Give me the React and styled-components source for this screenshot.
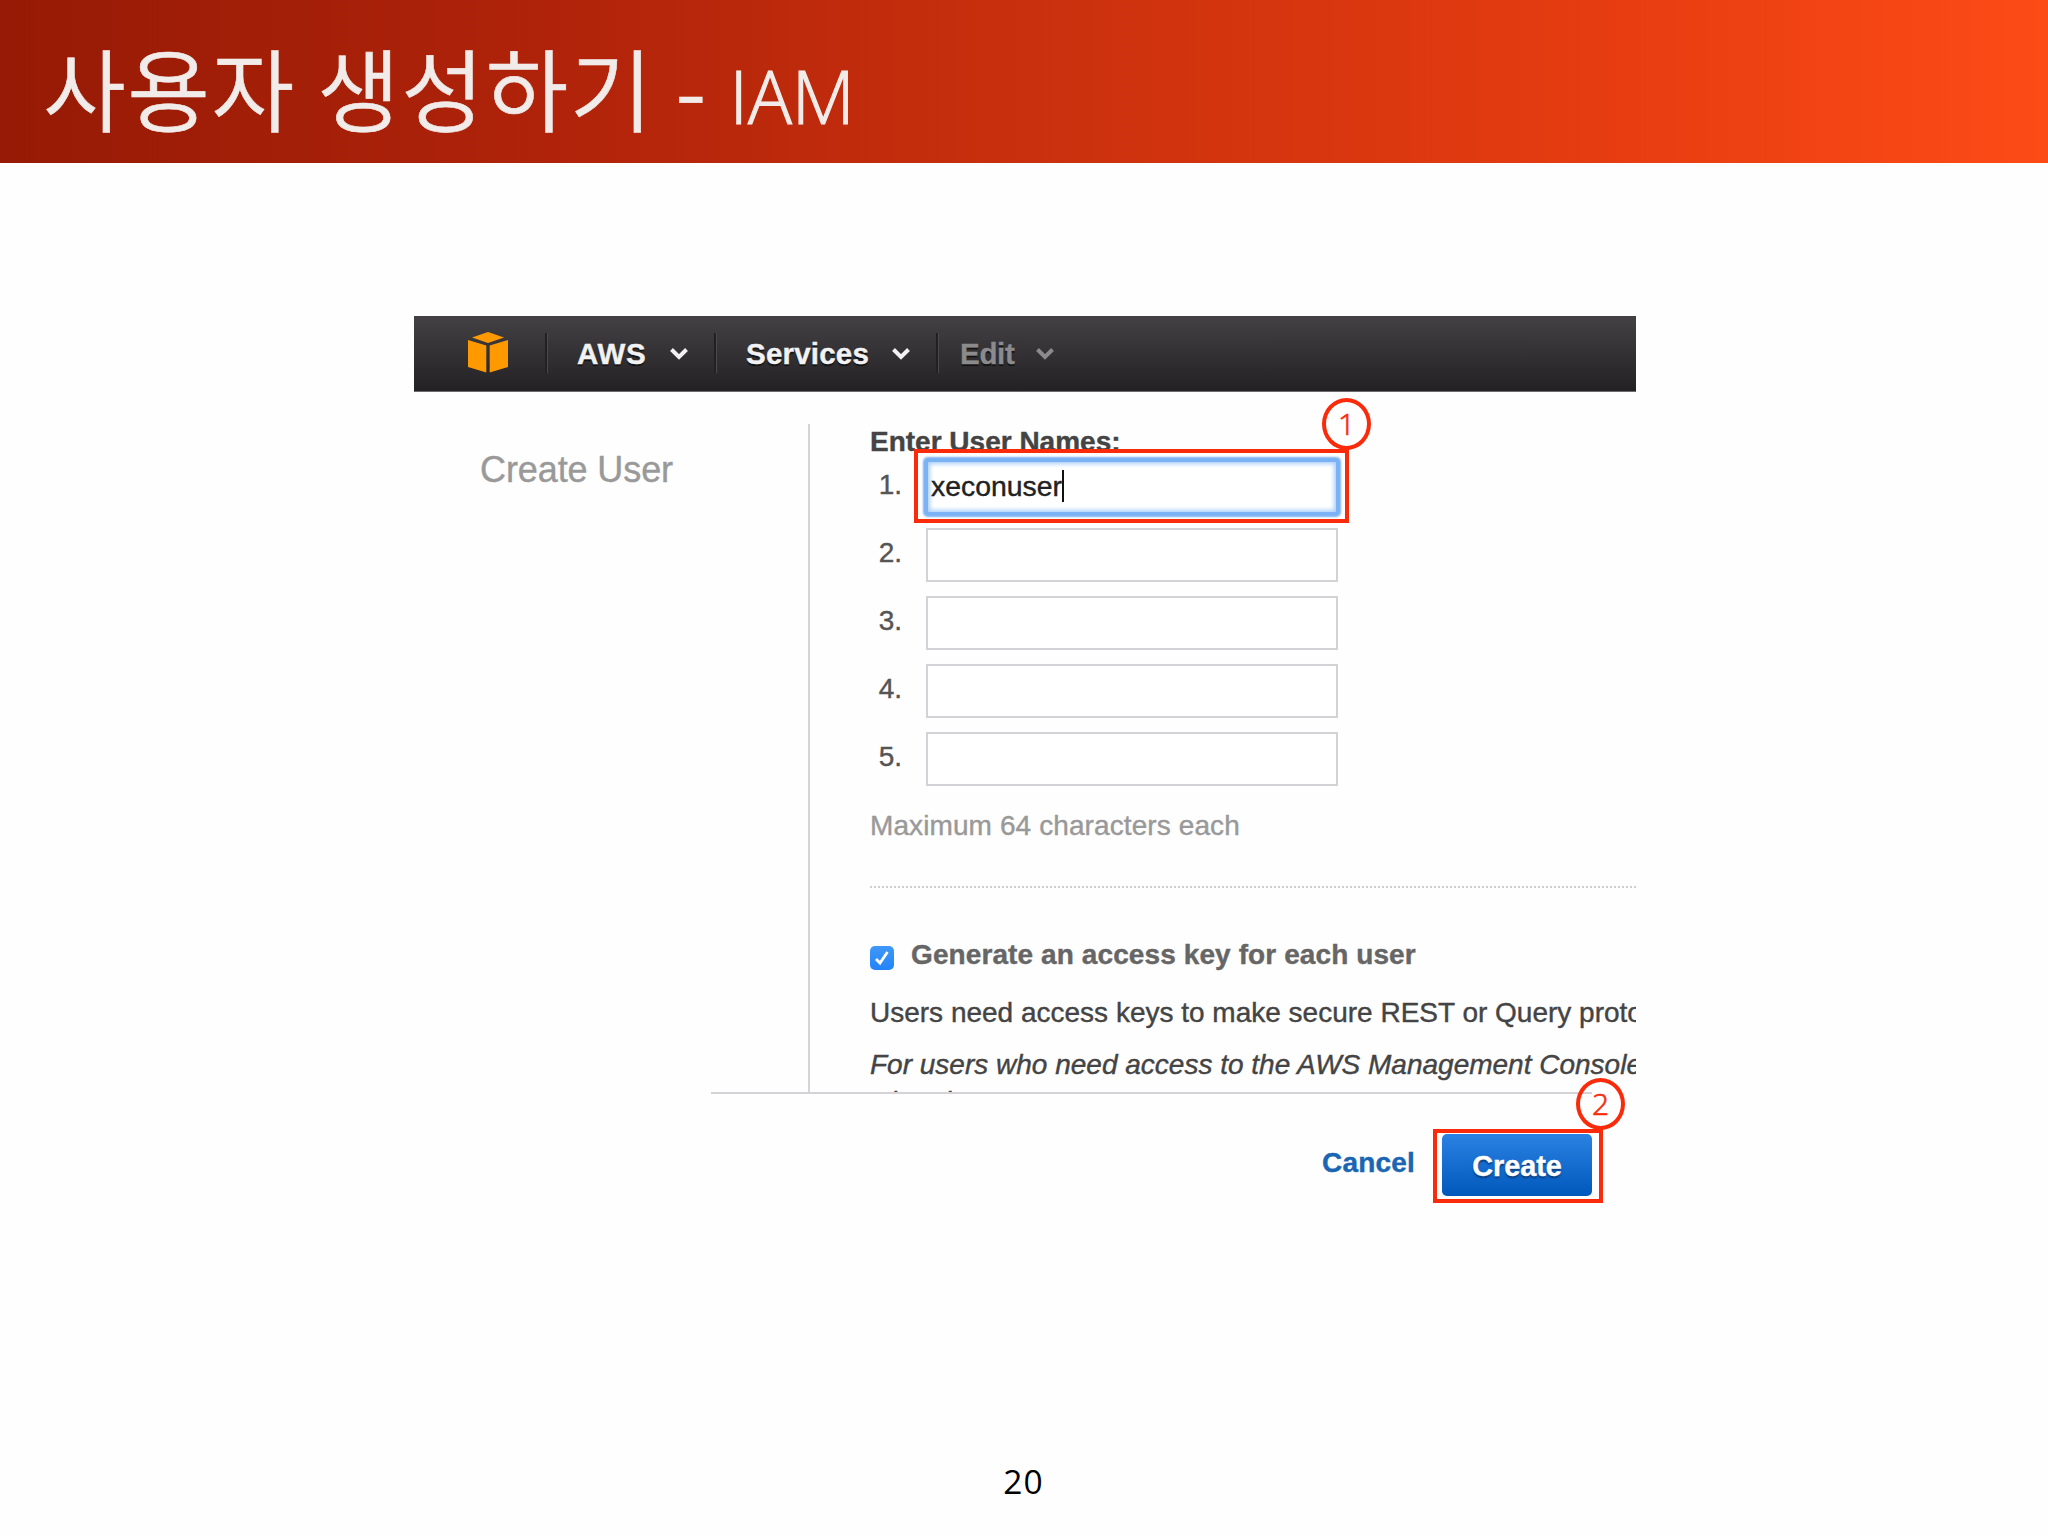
import React from 'react';
import styled, { createGlobalStyle } from 'styled-components';

const GlobalStyle = createGlobalStyle`
    * {
      box-sizing: border-box;
    }

    body {
      margin: 0;
      background: #fefefe;
    }
`;

const Slide = styled.div`
    display: flex;
    flex-direction: column;
    width: 2048px;
    height: 1536px;
    overflow: hidden;
    background: #fefefe;
    font-family: "Liberation Sans", Arial, sans-serif;
    font-size: 28px;
    line-height: 34px;
`;

const SlideHeader = styled.header`
    display: flex;
    align-items: flex-start;
    height: 163px;
    padding: 21px 0 0 43px;
    background: linear-gradient(90deg, #961a05 0%, #b0230a 27%, #c9300d 50%, #e63c11 78%, #fd4b16 100%);
    color: #f1ece9;
    white-space: pre;
    -webkit-text-stroke: 0.6px;
`;

const SlideTitle = styled.h1`
    margin: 0;
    font-family: "Noto Sans CJK KR DemiLight", "Noto Sans CJK KR", sans-serif;
    font-size: 90px;
    line-height: 130px;
    font-weight: 350;
    letter-spacing: 1.4px;
    word-spacing: 0;
`;

const SlideTopic = styled.span`
    margin: 18px 0 0 22px;
    font-family: "Open Sans", "Noto Sans", sans-serif;
    font-size: 73px;
    line-height: 114px;
    font-weight: 350;
    -webkit-text-stroke: 1.2px;
`;

const Console = styled.main`
    width: 1222px;
    height: 894px;
    margin: 153px 0 0 414px;
    -webkit-text-stroke: 0.4px;
`;

const NavBar = styled.nav`
    display: flex;
    align-items: center;
    height: 76px;
    background: linear-gradient(#434144, #232123);
    border-bottom: 1px solid #6d6b6d;
`;

const NavLogo = styled.div`
    display: flex;
    width: 131px;
    padding: 0 0 3px 53px;
`;

const NavItem = styled.div`
    display: flex;
    align-items: center;
    justify-content: space-between;
    width: ${props => props.width}px;
    height: 40px;
    margin-bottom: 2px;
    padding: 2px 26px 0 ${props => props.indent}px;
    border-left: 2px solid #222022;
    box-shadow: inset 1px 0 0 #4b494c;
    color: ${props => props.muted ? "#8b8a8c" : "#f2f2f2"};
    font-size: 29.5px;
    font-weight: bold;
    letter-spacing: ${props => props.spacing || 0}px;
    text-shadow: 0 2px 1px #111;
`;

const ConsoleBody = styled.section`
    display: flex;
    height: 700px;
    overflow: hidden;
`;

const Sidebar = styled.aside`
    flex: none;
    width: 396px;
    margin-top: 32px;
    padding: 24px 0 0 66px;
    border-right: 2px solid #d6d3d8;
`;

const SidebarTitle = styled.h2`
    margin: 0;
    color: #999;
    font-size: 36px;
    line-height: 44px;
    font-weight: normal;
    letter-spacing: -0.1px;
`;

const Form = styled.div`
    flex: none;
    width: 826px;
    padding: 33px 0 0 60px;
    color: #444;
`;

const FormHeading = styled.h3`
    margin: 0 0 1px;
    font-size: 28px;
    font-weight: bold;
`;

const UserList = styled.div`
    display: grid;
    gap: 14px;
`;

const UserRow = styled.div`
    display: grid;
    grid-template-columns: 32px 412px;
    column-gap: 24px;
    height: 54px;
`;

const UserNumber = styled.span`
    padding-bottom: 5px;
    line-height: 49px;
    text-align: right;
    color: #555;
`;

const UserField = styled.div`
    position: relative;
    display: flex;
    align-items: center;
    height: 54px;
    padding: 0 0 2px 3px;
    border: 2px solid ${props => props.focused ? "#7ab2f5" : "#d4d2d6"};
    border-radius: ${props => props.focused ? "2px" : "0"};
    background: #fff;
    box-shadow: ${props => props.focused ? "0 0 2px 3px #7ab2f5, inset 0 0 4px 2px #a9cffb" : "none"};
    color: #222;
    font-size: 28.4px;
`;

const Caret = styled.i`
    width: 2px;
    height: 32px;
    background: #111;
`;

const Hint = styled.p`
    margin: 23px 0 43px;
    color: #999;
    letter-spacing: 0.1px;
`;

const Divider = styled.hr`
    margin: 0;
    border: 0;
    border-top: 2px dotted #cfcfcf;
`;

const CheckRow = styled.div`
    display: flex;
    margin-top: 50px;
    color: #666;
    font-weight: bold;
    letter-spacing: 0.1px;
    white-space: nowrap;
`;

const CheckBox = styled.div`
    display: flex;
    align-items: center;
    justify-content: center;
    width: 24px;
    height: 24px;
    margin: 8px 17px 0 0;
    border-radius: 5px;
    background: linear-gradient(#3f97f8, #2384fa);
`;

const Paragraph = styled.p`
    margin: ${props => props.top}px 0 0;
    line-height: ${props => props.line}px;
    font-style: ${props => props.italic ? "italic" : "normal"};
    white-space: pre;
`;

const Actions = styled.footer`
    display: flex;
    align-items: flex-start;
    justify-content: flex-end;
    width: 881px;
    height: 118px;
    margin-left: 297px;
    padding-top: 40px;
    border-top: 2px solid #d6d3d8;
`;

const CancelLink = styled.a`
    margin: 12px 27px 0 0;
    color: #1a66b3;
    font-weight: bold;
    letter-spacing: 0.2px;
`;

const CreateButton = styled.div`
    position: relative;
    width: 150px;
    height: 62px;
    border-radius: 5px;
    background: linear-gradient(#2b82e3, #0058bb);
    color: #fff;
    font-size: 28.8px;
    line-height: 65px;
    font-weight: bold;
    text-align: center;
    text-shadow: 0 2px 2px #0a3a75;
`;

const Highlight = styled.div`
    position: absolute;
    inset: ${props => props.inset};
    border: 4px solid #f92b0b;
`;

const Step = styled.div`
    position: absolute;
    top: ${props => props.top}px;
    right: ${props => props.right}px;
    width: 49px;
    height: 52px;
    border: 4px solid #f92b0b;
    border-radius: 50%;
    color: #f92b0b;
    font-family: "Open Sans", "Noto Sans", sans-serif;
    font-size: 30px;
    line-height: 43px;
    font-weight: 350;
    text-align: center;
    text-shadow: none;
    -webkit-text-stroke: 0.7px;
`;

const PageNumber = styled.div`
    margin-top: 249px;
    padding-right: 1px;
    color: #000;
    font-family: "Open Sans", "Noto Sans", sans-serif;
    font-size: 33.5px;
    line-height: 44px;
    letter-spacing: 1px;
    text-align: center;
`;

const CubeIcon = () => (
    <svg width="42" height="42" viewBox="0 0 42 42" fill="#ff9900">
        <path d="M21 1 L37 6.5 L21 12 L5 6.5 Z" />
        <path d="M1 9 L19.3 14.5 V41.5 L1 36 Z" />
        <path d="M41 9 L22.7 14.5 V41.5 L41 36 Z" />
    </svg>
);

const Chevron = () => (
    <svg width="18" height="12" viewBox="0 0 18 12" fill="none" stroke="currentColor" strokeWidth="4">
        <path d="M1.5 1.5 L9 9 L16.5 1.5" />
    </svg>
);

const menus = [
    { label: "AWS", width: 169, indent: 30, spacing: 0.8 },
    { label: "Services", width: 222, indent: 30, spacing: 0.2 },
    { label: "Edit", width: 144, indent: 22, spacing: -0.3, muted: true },
];

const users = ["xeconuser", "", "", "", ""];

const App = () => (
    <Slide>
        <GlobalStyle />
        <SlideHeader>
            <SlideTitle>사용자 생성하기 -</SlideTitle>
            <SlideTopic>IAM</SlideTopic>
        </SlideHeader>
        <Console>
            <NavBar>
                <NavLogo><CubeIcon /></NavLogo>
                {menus.map(menu => (
                    <NavItem
                        key={menu.label}
                        width={menu.width}
                        indent={menu.indent}
                        spacing={menu.spacing}
                        muted={menu.muted}
                    >
                        {menu.label}
                        <Chevron />
                    </NavItem>
                ))}
            </NavBar>
            <ConsoleBody>
                <Sidebar>
                    <SidebarTitle>Create User</SidebarTitle>
                </Sidebar>
                <Form>
                    <FormHeading>Enter User Names:</FormHeading>
                    <UserList>
                        {users.map((name, index) => (
                            <UserRow key={index}>
                                <UserNumber>{index + 1}.</UserNumber>
                                <UserField focused={index === 0}>
                                    {name}
                                    {index === 0 && (
                                        <>
                                            <Caret />
                                            <Highlight inset="-13px -13px -11px -14px" />
                                            <Step top={-64} right={-35}>1</Step>
                                        </>
                                    )}
                                </UserField>
                            </UserRow>
                        ))}
                    </UserList>
                    <Hint>Maximum 64 characters each</Hint>
                    <Divider />
                    <CheckRow>
                        <CheckBox>
                            <svg width="16" height="16" viewBox="0 0 16 16" fill="none" stroke="#fff" strokeWidth="2.8">
                                <path d="M2 9 L6 13 L13.5 2" />
                            </svg>
                        </CheckBox>
                        Generate an access key for each user
                    </CheckRow>
                    <Paragraph top={24} line={34}>Users need access keys to make secure REST or Query protocol</Paragraph>
                    <Paragraph top={16} line={37} italic>
                        {"For users who need access to the AWS Management Console,\nwizard."}
                    </Paragraph>
                </Form>
            </ConsoleBody>
            <Actions>
                <CancelLink>Cancel</CancelLink>
                <CreateButton>
                    Create
                    <Highlight inset="-5px -11px -7px -9px" />
                    <Step top={-56} right={-33}>2</Step>
                </CreateButton>
            </Actions>
        </Console>
        <PageNumber>20</PageNumber>
    </Slide>
);

export default App;
